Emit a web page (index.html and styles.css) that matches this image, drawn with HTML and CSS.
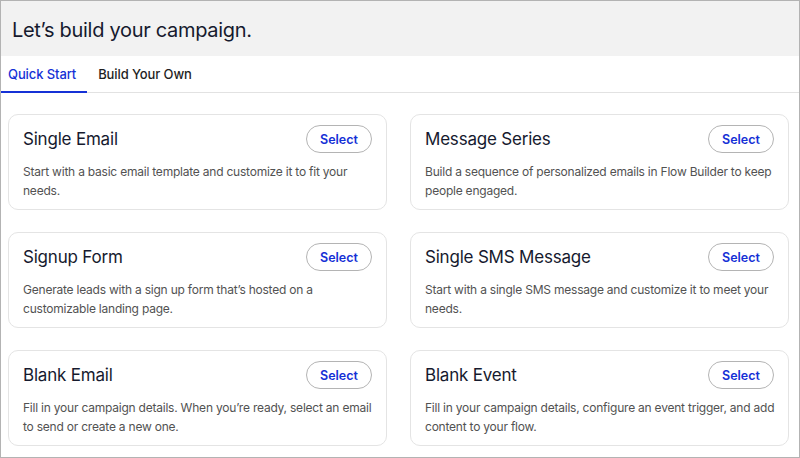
FILE: index.html
```html
<!DOCTYPE html>
<html lang="en">
<head>
<meta charset="utf-8">
<title>Let’s build your campaign.</title>
<link rel="stylesheet" href="styles.css">
</head>
<body>
<div class="frame">
  <header class="page-header">
    <h1 class="page-title">Let’s build your campaign.</h1>
  </header>
  <nav class="tabs">
    <a class="tab tab-active">Quick Start</a>
    <a class="tab">Build Your Own</a>
  </nav>
  <main class="grid">
    <section class="card">
      <div class="card-head">
        <h2 class="card-title">Single Email</h2>
        <button class="select-btn">Select</button>
      </div>
      <p class="card-desc">Start with a basic email template and customize it to fit your needs.</p>
    </section>
    <section class="card">
      <div class="card-head">
        <h2 class="card-title">Message Series</h2>
        <button class="select-btn">Select</button>
      </div>
      <p class="card-desc">Build a sequence of personalized emails in Flow Builder to keep people engaged.</p>
    </section>
    <section class="card">
      <div class="card-head">
        <h2 class="card-title">Signup Form</h2>
        <button class="select-btn">Select</button>
      </div>
      <p class="card-desc">Generate leads with a sign up form that’s hosted on a customizable landing page.</p>
    </section>
    <section class="card">
      <div class="card-head">
        <h2 class="card-title">Single SMS Message</h2>
        <button class="select-btn">Select</button>
      </div>
      <p class="card-desc">Start with a single SMS message and customize it to meet your needs.</p>
    </section>
    <section class="card">
      <div class="card-head">
        <h2 class="card-title">Blank Email</h2>
        <button class="select-btn">Select</button>
      </div>
      <p class="card-desc">Fill in your campaign details. When you’re ready, select an email to send or create a new one.</p>
    </section>
    <section class="card">
      <div class="card-head">
        <h2 class="card-title">Blank Event</h2>
        <button class="select-btn">Select</button>
      </div>
      <p class="card-desc">Fill in your campaign details, configure an event trigger, and add content to your flow.</p>
    </section>
  </main>
</div>
</body>
</html>
```

FILE: styles.css
```css
* { box-sizing: border-box; }
html, body { margin: 0; padding: 0; background: #ffffff; }
body {
  font-family: Inter, "Noto Sans", "Liberation Sans", sans-serif;
  color: #1c1d2b;
}
.frame {
  width: 800px;
  height: 458px;
  border: 1px solid #b3b3b3;
  overflow: hidden;
  background: #fff;
}
.page-header {
  height: 55px;
  background: #f2f2f2;
  display: flex;
  align-items: center;
  padding: 0 11px;
}
.page-title {
  margin: 0;
  font-size: 20px;
  font-weight: 400;
  color: #161a2e;
  letter-spacing: -0.3px;
  position: relative;
  top: 1px;
}
.tabs {
  height: 37px;
  display: flex;
  border-bottom: 1px solid #e2e2e2;
}
.tab {
  display: flex;
  align-items: center;
  padding: 0 11px 0 7px;
  font-size: 13px;
  font-weight: 500;
  letter-spacing: -0.1px;
  color: #1f1f1f;
  border-bottom: 2px solid transparent;
  margin-bottom: -1px;
}
.tab + .tab { padding-left: 11px; }
.tab-active {
  color: #1531d6;
  border-bottom-color: #1531d6;
}
.grid {
  display: grid;
  grid-template-columns: 1fr 1fr;
  gap: 22px 23px;
  padding: 21px 10px 0 7px;
}
.card {
  height: 96px;
  border: 1px solid #e4e4e4;
  border-radius: 10px;
  padding: 10px 14px 0 14px;
}
.card-head {
  display: flex;
  justify-content: space-between;
  align-items: center;
  height: 28px;
}
.card-title {
  margin: 0;
  font-size: 17px;
  font-weight: 400;
  letter-spacing: -0.2px;
  color: #161a2e;
}
.select-btn {
  width: 66px;
  height: 28px;
  border: 1px solid #b4b4b4;
  border-radius: 14px;
  background: #fff;
  font-family: inherit;
  font-size: 12.5px;
  font-weight: 600;
  color: #1531d6;
  padding: 0;
}
.card-desc {
  margin: 9px -2px 0 0;
  font-size: 12px;
  letter-spacing: -0.22px;
  line-height: 19px;
  color: #525252;
}
```
